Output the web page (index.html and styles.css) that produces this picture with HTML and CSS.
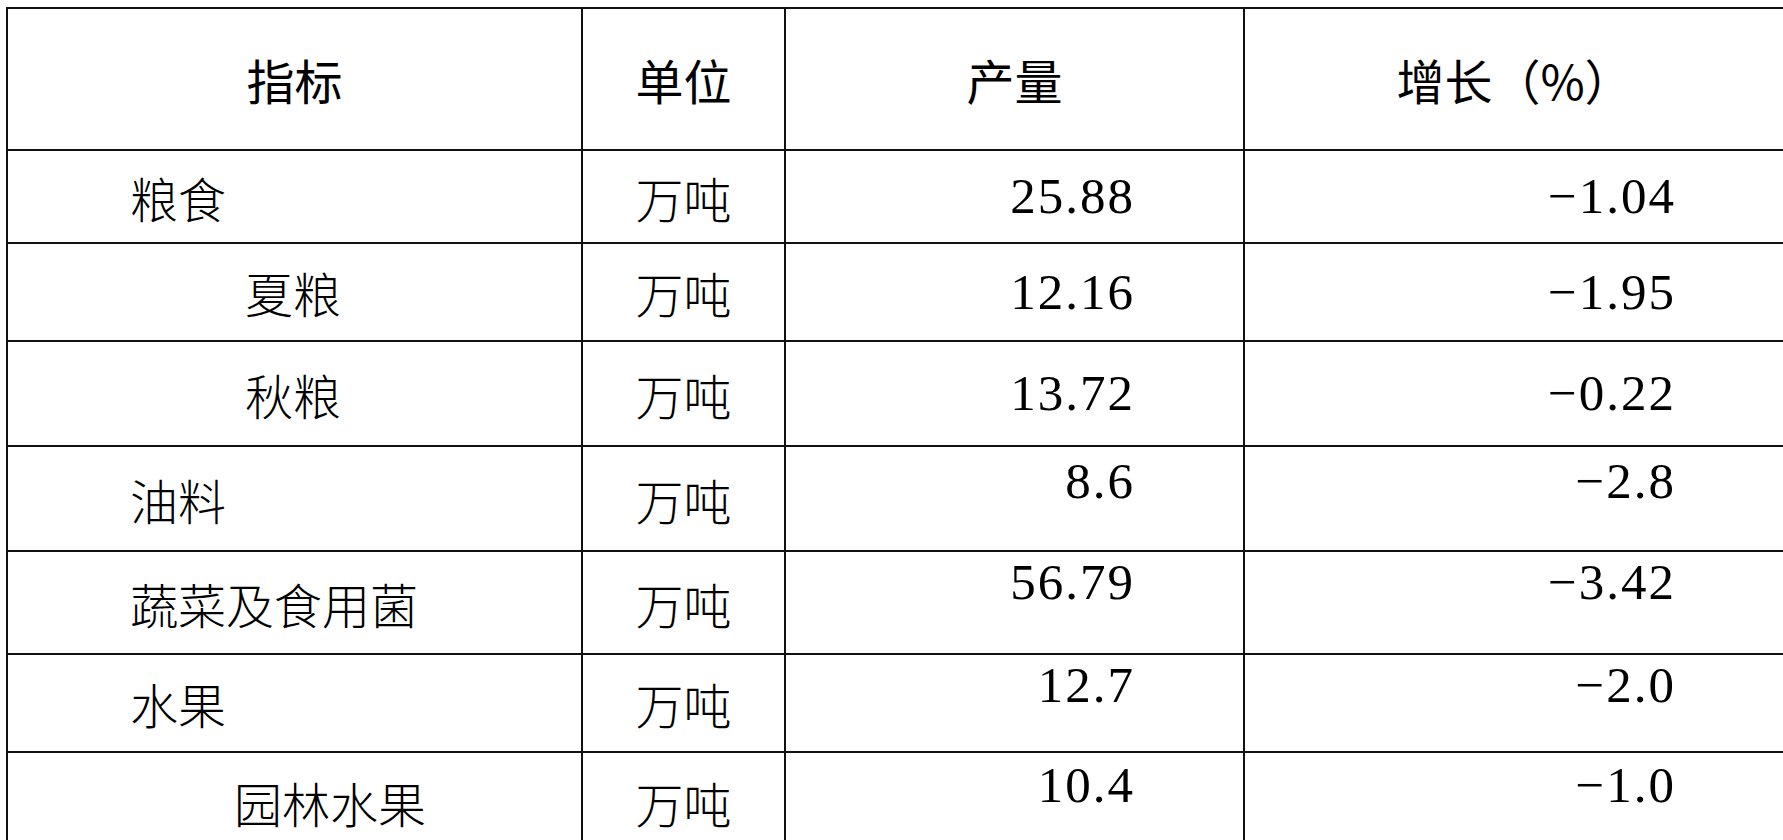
FILE: index.html
```html
<!DOCTYPE html>
<html lang="zh-CN">
<head>
<meta charset="utf-8">
<title>主要农产品产量</title>
<link rel="stylesheet" href="styles.css">
</head>
<body>
<div class="sheet">
  <div class="cell head">指标</div>
  <div class="cell head">单位</div>
  <div class="cell head">产量</div>
  <div class="cell head">增长（%）</div>

  <div class="cell name">粮食</div>
  <div class="cell unit">万吨</div>
  <div class="cell num">25.88</div>
  <div class="cell num">−1.04</div>

  <div class="cell name sub">夏粮</div>
  <div class="cell unit">万吨</div>
  <div class="cell num">12.16</div>
  <div class="cell num">−1.95</div>

  <div class="cell name sub">秋粮</div>
  <div class="cell unit">万吨</div>
  <div class="cell num">13.72</div>
  <div class="cell num">−0.22</div>

  <div class="cell name">油料</div>
  <div class="cell unit">万吨</div>
  <div class="cell num top top-a">8.6</div>
  <div class="cell num top top-a">−2.8</div>

  <div class="cell name">蔬菜及食用菌</div>
  <div class="cell unit">万吨</div>
  <div class="cell num top top-b">56.79</div>
  <div class="cell num top top-b">−3.42</div>

  <div class="cell name">水果</div>
  <div class="cell unit">万吨</div>
  <div class="cell num top top-b">12.7</div>
  <div class="cell num top top-b">−2.0</div>

  <div class="cell name sub2">园林水果</div>
  <div class="cell unit">万吨</div>
  <div class="cell num top top-c">10.4</div>
  <div class="cell num top top-c">−1.0</div>
</div>
</body>
</html>
```
FILE: styles.css
```css
html, body {
  margin: 0;
  padding: 0;
  overflow: hidden;
  background: #ffffff;
}

.sheet {
  display: grid;
  grid-template-columns: 575px 203px 459px 541px;
  grid-template-rows: 142px 93px 98px 105px 105px 103px 98px 100px;
  width: max-content;
  margin: 7px 0 0 6px;
  border-left: 2px solid #111111;
  border-top: 2px solid #111111;
}

.cell {
  box-sizing: border-box;
  display: flex;
  align-items: center;
  border-right: 2px solid #111111;
  border-bottom: 2px solid #111111;
  color: #000000;
  font-size: 48px;
  line-height: 1;
  white-space: nowrap;
}

.head {
  justify-content: center;
  font-family: "Noto Sans CJK SC", sans-serif;
  font-weight: 400;
}

.name {
  justify-content: flex-start;
  padding-left: 122px;
  font-family: "Noto Sans CJK SC", sans-serif;
  font-weight: 300;
}

.name.sub {
  padding-left: 237px;
}

.name.sub2 {
  padding-left: 226px;
}

.unit {
  justify-content: center;
  font-family: "Noto Sans CJK SC", sans-serif;
  font-weight: 300;
}

.num {
  justify-content: flex-end;
  padding-right: 108px;
  font-family: "Liberation Serif", "Times New Roman", serif;
  font-size: 51px;
  letter-spacing: 2px;
}

.num.top {
  align-items: flex-start;
}

.num.top-a {
  padding-top: 9px;
}

.num.top-b {
  padding-top: 5px;
}

.num.top-c {
  padding-top: 7px;
}
```
